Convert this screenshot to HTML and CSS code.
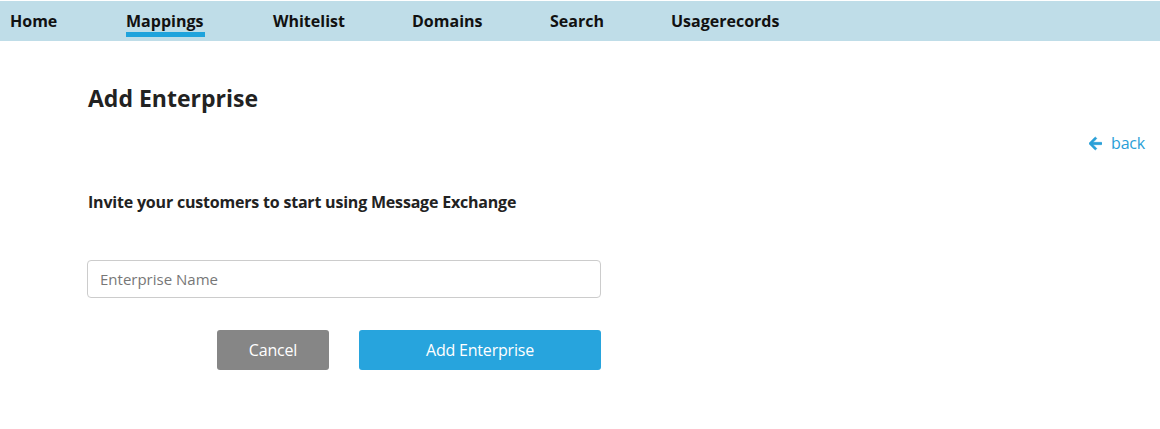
FILE: index.html
```html
<!DOCTYPE html>
<html>
<head>
<meta charset="utf-8">
<link rel="stylesheet" href="styles.css">
</head>
<body>
<nav class="topnav">
  <a class="nav-item" href="#">Home</a>
  <a class="nav-item active" href="#">Mappings</a>
  <a class="nav-item" href="#">Whitelist</a>
  <a class="nav-item" href="#">Domains</a>
  <a class="nav-item" href="#">Search</a>
  <a class="nav-item" href="#">Usagerecords</a>
</nav>
<main class="content">
  <h1 class="title">Add Enterprise</h1>
  <div class="back-row">
    <a class="back" href="#"><svg class="back-icon" viewBox="0 0 448 512" width="13" height="15"><path fill="currentColor" stroke="currentColor" stroke-width="20" d="M257.5 445.1l-22.2 22.2c-9.4 9.4-24.6 9.4-33.9 0L7 273c-9.4-9.4-9.4-24.6 0-33.9L201.4 44.7c9.4-9.4 24.6-9.4 33.9 0l22.2 22.2c9.5 9.5 9.3 25-.4 34.3L136.6 216H424c13.3 0 24 10.7 24 24v32c0 13.3-10.7 24-24 24H136.6l120.5 114.8c9.8 9.3 10 24.8.4 34.3z"/></svg>back</a>
  </div>
  <p class="subtitle">Invite your customers to start using Message Exchange</p>
  <form class="form">
    <input class="field" type="text" placeholder="Enterprise Name">
    <div class="actions">
      <button type="button" class="btn btn-cancel">Cancel</button>
      <button type="button" class="btn btn-primary">Add Enterprise</button>
    </div>
  </form>
</main>
</body>
</html>
```

FILE: styles.css
```css
html, body {
  margin: 0;
  padding: 0;
  background: #fff;
  font-family: "Segoe UI", "Open Sans", "Noto Sans", sans-serif;
  color: #222;
}

.topnav {
  margin-top: 1px;
  height: 40px;
  background: #bfdde8;
  display: flex;
  align-items: stretch;
  padding-left: 10px;
}

.nav-item {
  position: relative;
  display: flex;
  align-items: center;
  height: 40px;
  box-sizing: border-box;
  font-size: 16px;
  font-weight: 700;
  color: #111;
  text-decoration: none;
  letter-spacing: 0;
}

.nav-item:nth-child(1) { width: 116px; }
.nav-item:nth-child(2) { width: 147px; }
.nav-item:nth-child(3) { width: 139px; }
.nav-item:nth-child(4) { width: 138px; }
.nav-item:nth-child(5) { width: 121px; }

.nav-item.active::after {
  content: "";
  position: absolute;
  left: 0;
  width: 79px;
  top: 31px;
  height: 5px;
  background: #1fa3dc;
}

.content {
  padding: 0 15px 0 87px;
}

.title {
  margin: 42px 0 0 1px;
  font-size: 23px;
  font-weight: 700;
  line-height: 30px;
  letter-spacing: 0;
  color: #222;
}

.back-row {
  display: flex;
  justify-content: flex-end;
  margin-top: 19px;
}

.back {
  display: flex;
  align-items: center;
  gap: 9px;
  color: #2aa0d8;
  text-decoration: none;
  font-size: 16px;
  line-height: 22px;
  letter-spacing: -0.2px;
}

.back-icon {
  display: block;
}

.subtitle {
  margin: 37px 0 0 1px;
  font-size: 16px;
  font-weight: 700;
  line-height: 22px;
  letter-spacing: -0.2px;
  color: #222;
}

.form {
  width: 514px;
  margin-top: 47px;
}

.field {
  display: block;
  width: 100%;
  height: 38px;
  box-sizing: border-box;
  border: 1px solid #ccc;
  border-radius: 4px;
  padding: 0 12px;
  font-family: inherit;
  font-size: 15px;
  color: #333;
  outline: none;
}

.field::placeholder {
  color: #777;
}

.actions {
  display: flex;
  justify-content: flex-end;
  gap: 30px;
  margin-top: 32px;
}

.btn {
  height: 40px;
  border: none;
  border-radius: 3px;
  color: #fff;
  font-family: inherit;
  font-size: 16px;
  letter-spacing: -0.2px;
  cursor: pointer;
}

.btn-cancel {
  width: 112px;
  background: #868686;
}

.btn-primary {
  width: 242px;
  background: #27a4dd;
}
```
